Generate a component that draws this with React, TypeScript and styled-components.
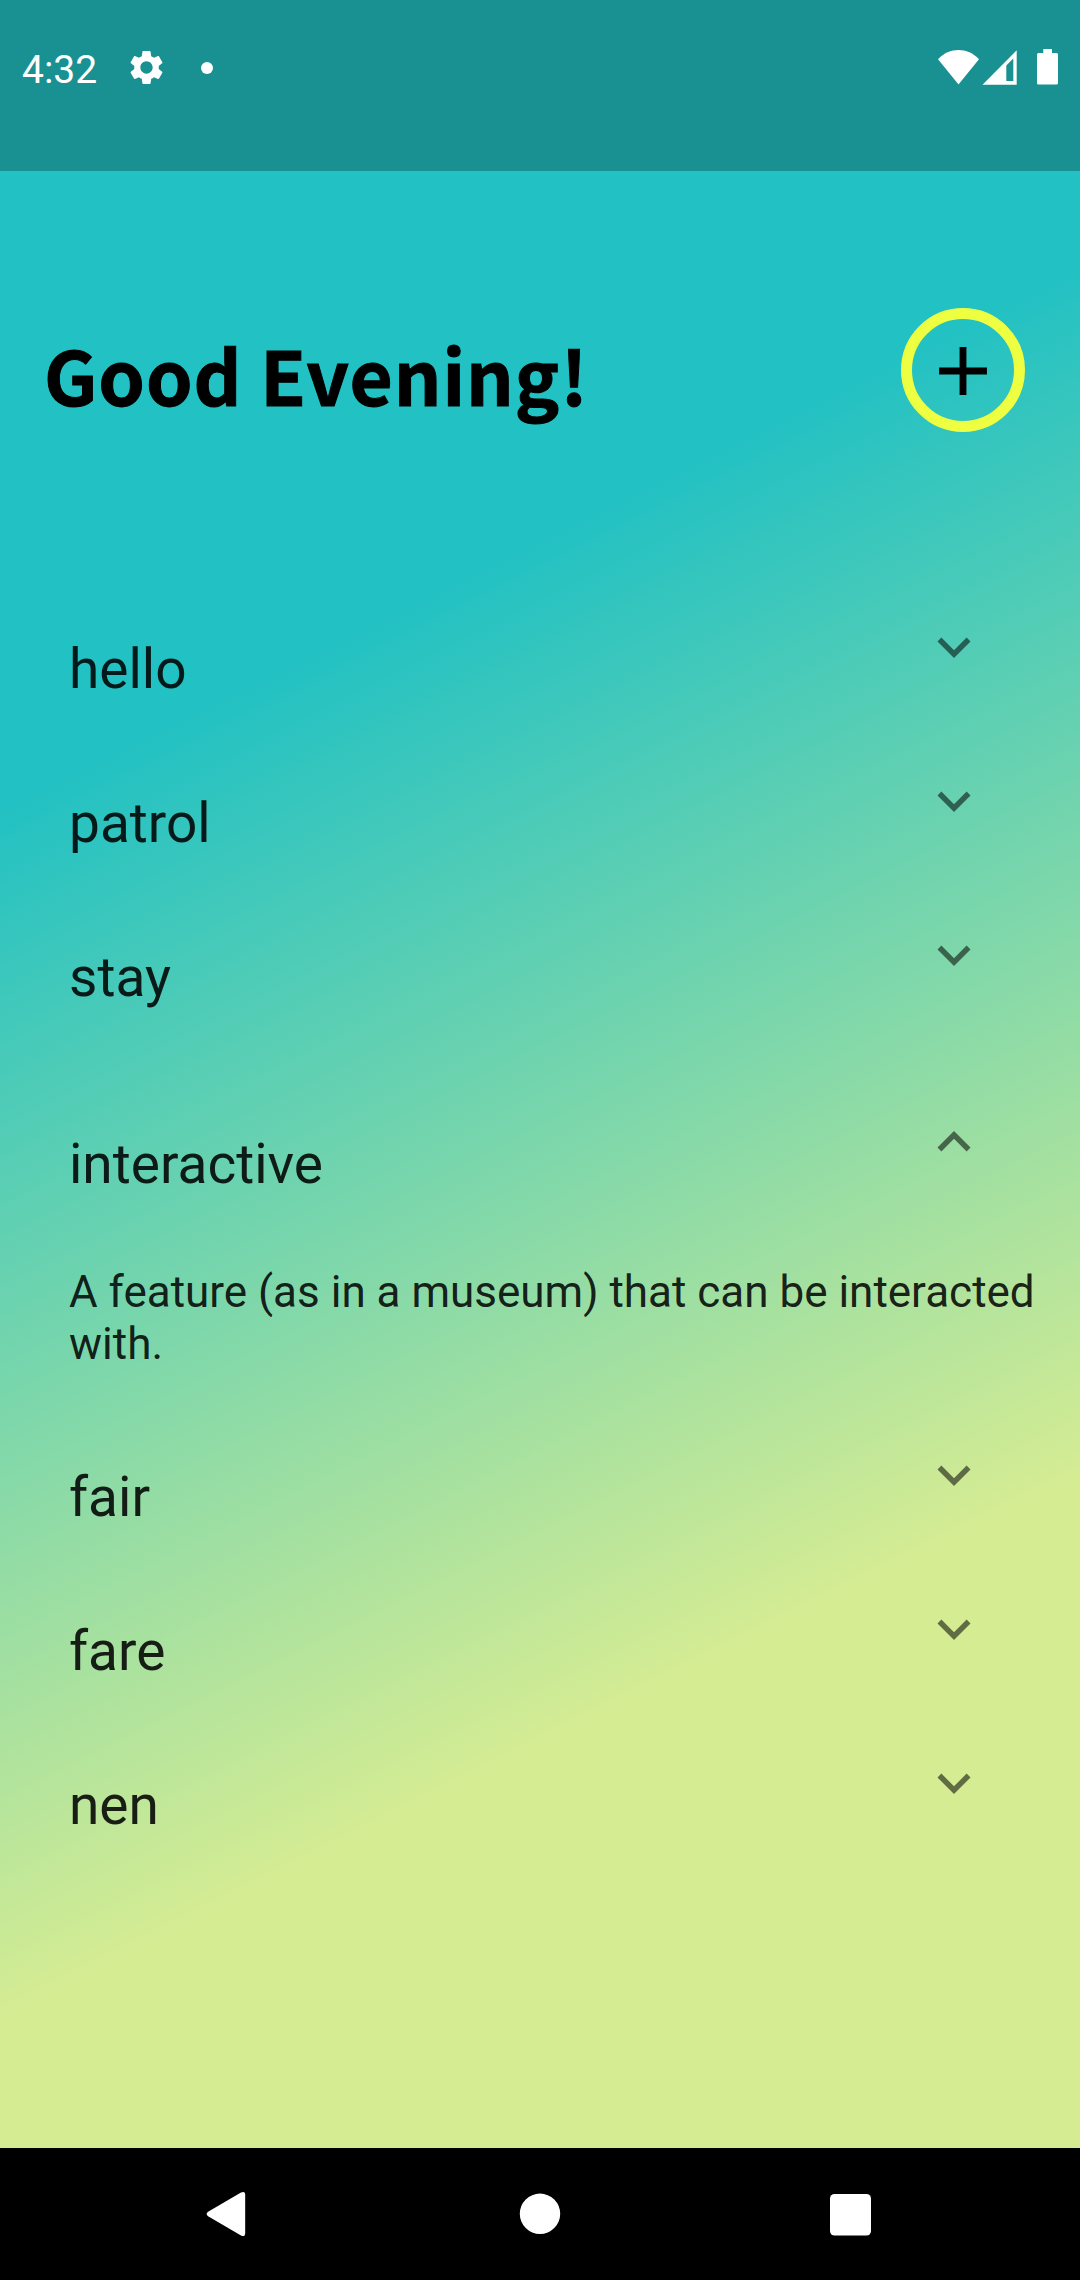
import React, { useState } from "react";
import styled, { createGlobalStyle } from "styled-components";

const GlobalStyle = createGlobalStyle`
  body { margin: 0; background: #000; }
  *, *::before, *::after { box-sizing: border-box; }
`;

const Screen = styled.div`
  width: 1080px;
  height: 2280px;
  display: flex;
  flex-direction: column;
  overflow: hidden;
  font-family: Roboto, "Liberation Sans", sans-serif;
`;

const Page = styled.div`
  flex: 1;
  min-height: 0;
  display: flex;
  flex-direction: column;
  background: linear-gradient(153.307deg, #22c1c3 30%, #d5ec93 75%);
`;

const StatusBar = styled.header`
  height: 171px;
  flex: none;
  display: flex;
  align-items: flex-start;
  justify-content: space-between;
  padding: 46px 20px 0 22px;
  background: rgba(0, 0, 0, 0.25);
  color: #fff;
`;

const StatusGroup = styled.div`
  display: flex;
  align-items: center;
  height: 43px;
`;

const Clock = styled.span`
  width: 104px;
  padding-top: 5px;
  font-size: 39px;
  line-height: 46px;
`;

const NotificationDot = styled.span`
  width: 12px;
  height: 12px;
  margin-left: 34px;
  border-radius: 50%;
  background: #fff;
`;

const Heading = styled.div`
  height: 399px;
  flex: none;
  display: flex;
  justify-content: space-between;
  align-items: flex-start;
  padding: 137px 55px 0 44px;
`;

const Greeting = styled.h1`
  margin: 11px 0 0;
  font-family: "Noto Sans CJK SC", "Noto Sans", sans-serif;
  font-weight: 700;
  font-size: 74.5px;
  line-height: 110px;
  letter-spacing: 0.95px;
  -webkit-text-stroke: 1px #000;
  white-space: nowrap;
  color: #000;
`;

const AddButton = styled.button`
  width: 124px;
  height: 124px;
  padding: 1px 0 0;
  display: grid;
  place-items: center;
  border: 11px solid #eeff41;
  border-radius: 50%;
  background: transparent;
  color: #000;
`;

const WordList = styled.main`
  display: flex;
  flex-direction: column;
`;

const Panel = styled.section<{ $open: boolean }>`
  margin-top: ${(p) => (p.$open ? 33 : 0)}px;
  padding-bottom: ${(p) => (p.$open ? 28 : 0)}px;
`;

const PanelHeader = styled.div`
  height: 154px;
  display: flex;
  justify-content: space-between;
  align-items: flex-start;
  padding: 44px 93px 0 69px;
  cursor: pointer;
`;

const Word = styled.span`
  margin-top: 23px;
  font-size: 55px;
  line-height: 64px;
  color: rgba(0, 0, 0, 0.87);
`;

const Definition = styled.p`
  margin: 0;
  padding: 47px 20px 0 69px;
  font-size: 44px;
  line-height: 52px;
  color: rgba(0, 0, 0, 0.87);
`;

const Chevron = styled.svg<{ $up: boolean }>`
  width: 66px;
  height: 66px;
  fill: rgba(0, 0, 0, 0.54);
  transform: rotate(${(p) => (p.$up ? 180 : 0)}deg);
`;

const NavBar = styled.nav`
  height: 132px;
  flex: none;
  display: flex;
  align-items: center;
  justify-content: space-between;
  padding: 0 205px;
  background: #000;
`;

const NavIcon = styled.svg`
  width: 48px;
  height: 48px;
  fill: #fff;
`;

const entries = [
  { word: "hello", definition: "" },
  { word: "patrol", definition: "" },
  { word: "stay", definition: "" },
  { word: "interactive", definition: "A feature (as in a museum) that can be interacted with." },
  { word: "fair", definition: "" },
  { word: "fare", definition: "" },
  { word: "nen", definition: "" },
];

const GearIcon = () => (
  <svg width="41" height="41" viewBox="0 0 24 24" fill="#fff">
    <path d="M19.14 12.94c.04-.3.06-.61.06-.94 0-.32-.02-.64-.07-.94l2.03-1.58c.18-.14.23-.41.12-.61l-1.92-3.32c-.12-.22-.37-.29-.59-.22l-2.39.96c-.5-.38-1.03-.7-1.62-.94l-.36-2.54c-.04-.24-.24-.41-.48-.41h-3.84c-.24 0-.43.17-.47.41l-.36 2.54c-.59.24-1.13.57-1.62.94l-2.39-.96c-.22-.08-.47 0-.59.22L2.74 8.87c-.12.21-.08.47.12.61l2.03 1.58c-.05.3-.09.63-.09.94s.02.64.07.94l-2.03 1.58c-.18.14-.23.41-.12.61l1.92 3.32c.12.22.37.29.59.22l2.39-.96c.5.38 1.03.7 1.62.94l.36 2.54c.05.24.24.41.48.41h3.84c.24 0 .44-.17.47-.41l.36-2.54c.59-.24 1.13-.56 1.62-.94l2.39.96c.22.08.47 0 .59-.22l1.92-3.32c.12-.22.07-.47-.12-.61l-2.01-1.58zM12 15.6c-1.98 0-3.6-1.62-3.6-3.6s1.62-3.6 3.6-3.6 3.6 1.62 3.6 3.6-1.62 3.6-3.6 3.6z" />
  </svg>
);

/* Wi-Fi, mobile signal and battery share one strip. */
const SystemIcons = () => (
  <svg width="122" height="44" viewBox="938 46 122 44" fill="#fff">
    <path d="M938 59.3C949.5 47 967.500 47 979 59.3L958.500 84.500Z" />
    <path fillRule="evenodd" d="M982.500 84.700L1016.700 50.300V84.700ZM1006.300 65.500V81H1013.300V58.500Z" />
    <path d="M1043.300 49H1052V53H1056.500Q1058 53 1058 54.500V83Q1058 84.600 1056.500 84.600H1038.500Q1037 84.600 1037 83V54.500Q1037 53 1038.500 53H1043.300Z" />
  </svg>
);

export default function App() {
  const [openWord, setOpenWord] = useState("interactive");

  return (
    <>
      <GlobalStyle />
      <Screen>
        <Page>
          <StatusBar>
            <StatusGroup>
              <Clock>4:32</Clock>
              <GearIcon />
              <NotificationDot />
            </StatusGroup>
            <SystemIcons />
          </StatusBar>
          <Heading>
            <Greeting>Good Evening!</Greeting>
            <AddButton aria-label="Add word">
              <svg width="82" height="82" viewBox="0 0 24 24" fill="currentColor">
                <path d="M19 13h-6v6h-2v-6H5v-2h6V5h2v6h6z" />
              </svg>
            </AddButton>
          </Heading>
          <WordList>
            {entries.map(({ word, definition }) => {
              const open = word === openWord;
              return (
                <Panel key={word} $open={open}>
                  <PanelHeader onClick={() => setOpenWord(open ? "" : word)}>
                    <Word>{word}</Word>
                    <Chevron $up={open} viewBox="0 0 24 24">
                      <path d="M16.590 8.590L12 13.170 7.410 8.590 6 10l6 6 6-6z" />
                    </Chevron>
                  </PanelHeader>
                  {open && <Definition>{definition}</Definition>}
                </Panel>
              );
            })}
          </WordList>
        </Page>
        <NavBar>
          <NavIcon viewBox="0 0 48 48">
            <path d="M3.500 21.500L36 2.500Q40.200 0.500 40.200 5V43Q40.200 47.500 36 45.500L3.500 26.500Q-0.300 24 3.500 21.500Z" />
          </NavIcon>
          <NavIcon viewBox="0 0 48 48">
            <circle cx="24" cy="23.800" r="20.200" />
          </NavIcon>
          <NavIcon viewBox="0 0 48 48">
            <rect x="3" y="4" width="41" height="41.500" rx="4.500" />
          </NavIcon>
        </NavBar>
      </Screen>
    </>
  );
}
